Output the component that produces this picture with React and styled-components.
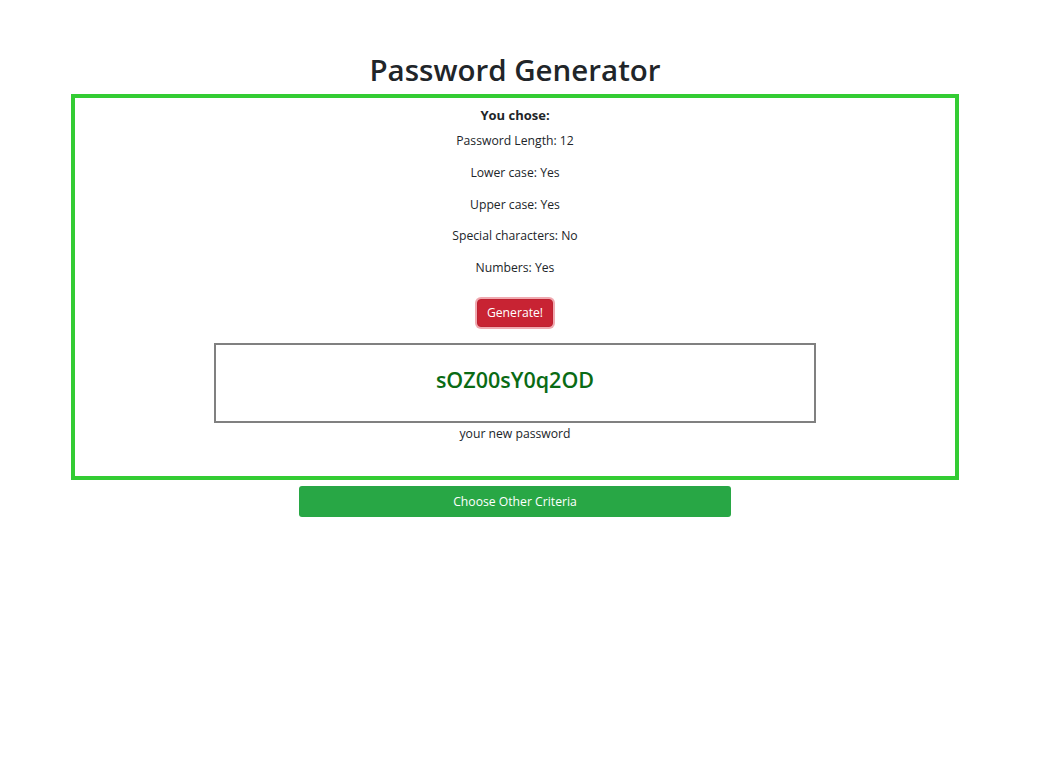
import React from "react";
import styled, { createGlobalStyle } from "styled-components";

const GlobalStyle = createGlobalStyle`
  body {
    margin: 0;
    background: #fff;
    font-family: "Open Sans", "Liberation Sans", sans-serif;
    color: #212529;
  }
`;

const Page = styled.div`
  width: 1030px;
  display: flex;
  flex-direction: column;
  align-items: center;
  padding-top: 51px;
`;

const Title = styled.h1`
  margin: 0 0 6px;
  font-size: 29.5px;
  font-weight: 600;
  line-height: 37px;
  color: #212529;
`;

const Card = styled.div`
  width: 880px;
  border: 4px solid #33cc33;
  display: flex;
  flex-direction: column;
  align-items: center;
  padding: 8px 0 33px;
`;

const Heading = styled.div`
  font-size: 13px;
  font-weight: 700;
  line-height: 18px;
  margin-bottom: 8px;
`;

const Line = styled.p`
  margin: 0 0 13.75px;
  font-size: 12.2px;
  line-height: 18px;
`;

const DangerButton = styled.button`
  margin-top: 8px;
  background: #c82333;
  color: #fff;
  border: 1px solid #bd2130;
  border-radius: 4px;
  box-shadow: 0 0 0 2px rgba(225, 83, 97, 0.5);
  font-family: inherit;
  font-size: 12.2px;
  padding: 5px 9px;
  line-height: 16px;
`;

const Result = styled.div`
  margin-top: 16px;
  width: 598px;
  height: 70px;
  padding-bottom: 6px;
  border: 2px solid #808080;
  display: flex;
  align-items: center;
  justify-content: center;
  font-size: 21.5px;
  font-weight: 600;
  color: #0a6b14;
`;

const Caption = styled.div`
  margin-top: 2px;
  font-size: 12.2px;
  line-height: 18px;
`;

const SuccessButton = styled.button`
  margin-top: 6px;
  width: 432px;
  height: 31px;
  background: #28a745;
  color: #fff;
  border: none;
  border-radius: 3px;
  font-family: inherit;
  font-size: 12.2px;
`;

export default function App() {
  return (
    <Page>
      <GlobalStyle />
      <Title>Password Generator</Title>
      <Card>
        <Heading>You chose:</Heading>
        <Line>Password Length: 12</Line>
        <Line>Lower case: Yes</Line>
        <Line>Upper case: Yes</Line>
        <Line>Special characters: No</Line>
        <Line>Numbers: Yes</Line>
        <DangerButton>Generate!</DangerButton>
        <Result>sOZ00sY0q2OD</Result>
        <Caption>your new password</Caption>
      </Card>
      <SuccessButton>Choose Other Criteria</SuccessButton>
    </Page>
  );
}
